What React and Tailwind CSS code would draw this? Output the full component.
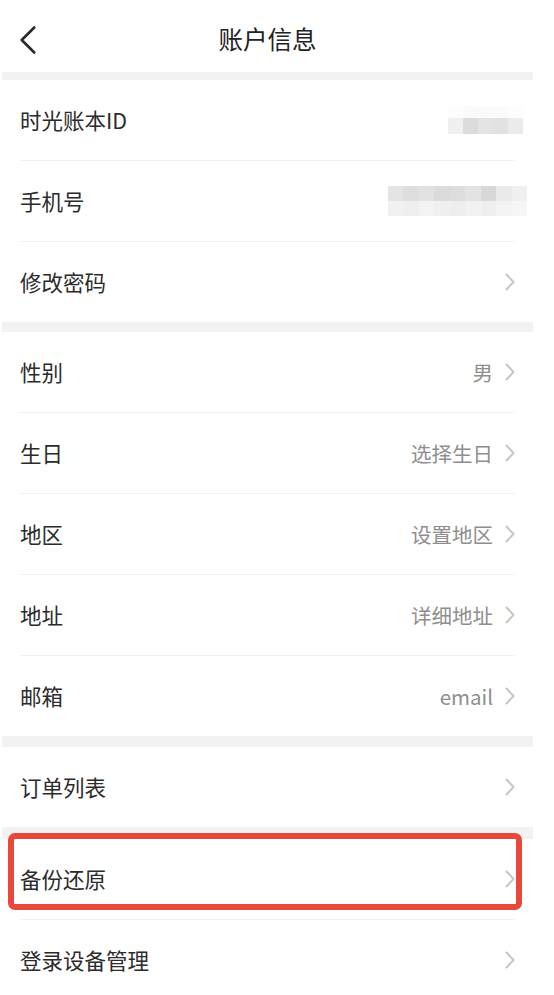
import { ChevronLeft } from "lucide-react";

const font = { fontFamily: '"Noto Sans CJK SC", "Noto Sans", sans-serif' };

const Arrow = () => (
  <svg width="10" height="18" viewBox="0 0 10 18" fill="none" className="shrink-0">
    <path d="M1.5 1.5 L8.5 9 L1.5 16.5" stroke="#c6c6c6" strokeWidth="2" strokeLinecap="round" strokeLinejoin="round" />
  </svg>
);

// pixelated blur placeholders
const IdBlur = () => (
  <div className="flex flex-col mr-[-8px]">
    <div className="flex h-[12px]">
      <div className="w-[15px] bg-[#fdfdfd]" />
      <div className="w-[15px] bg-[#fafafa]" />
      <div className="w-[30px] bg-[#fbfbfb]" />
      <div className="w-[15px] bg-[#fdfdfd]" />
    </div>
    <div className="flex h-[16px]">
      <div className="w-[15px] bg-[#f0f0f0]" />
      <div className="w-[15px] bg-[#dcdcdc]" />
      <div className="w-[15px] bg-[#e4e4e4]" />
      <div className="w-[15px] bg-[#e2e2e2]" />
      <div className="w-[15px] bg-[#ececec]" />
    </div>
  </div>
);

const PhoneBlur = () => (
  <div className="flex flex-col mr-[-12px]">
    <div className="flex h-[15px]">
      {["#e4e4e4", "#dedede", "#e2e2e2", "#dbdbdb", "#dddddd", "#e3e3e3", "#d8d8d8", "#eaeaea", "#f0f0f0"].map((c, i) => (
        <div key={i} className="w-[15.5px]" style={{ backgroundColor: c }} />
      ))}
    </div>
    <div className="flex h-[15px]">
      {["#f1f1f1", "#efefef", "#f3f3f3", "#f0f0f0", "#eeeeee", "#f2f2f2", "#efefef", "#f3f3f3", "#f6f6f6"].map((c, i) => (
        <div key={i} className="w-[15.5px]" style={{ backgroundColor: c }} />
      ))}
    </div>
  </div>
);

const Row = ({ label, value, arrow = true, right, divider = true, children }) => (
  <div className="relative">
    <div
      className={
        "ml-[18px] w-[495px] h-[80px] flex items-center justify-between " +
        (divider ? "border-b border-[#f0f0f0] h-[81px]" : "")
      }
    >
      <span className="text-[21.5px] text-[#2b2b2b]">{label}</span>
      <div className="flex items-center gap-[12px]">
        {right}
        {value && <span className="text-[20.5px] text-[#8e8e8e]">{value}</span>}
        {arrow && <Arrow />}
      </div>
    </div>
    {children}
  </div>
);

const Band = ({ h }) => <div className={"bg-[#f2f2f2] " + h} />;

export default function App() {
  return (
    <div className="w-[554px] h-[995px] bg-white overflow-hidden" style={font}>
      <div className="w-[533px] pl-[2px]">
        {/* header */}
        <div className="h-[72px] flex items-center relative">
          <ChevronLeft className="absolute left-[1px] top-[15px]" size={50} strokeWidth={1.3} color="#2b2b2b" />
          <div className="flex-1 text-center text-[24.5px] text-[#222] pt-[6px]">账户信息</div>
        </div>
        <Band h="h-[8px]" />
        <Row label="时光账本ID" arrow={false} right={<IdBlur />} />
        <Row label="手机号" arrow={false} right={<PhoneBlur />} />
        <Row label="修改密码" divider={false} />
        <Band h="h-[10px]" />
        <Row label="性别" value="男" />
        <Row label="生日" value="选择生日" />
        <Row label="地区" value="设置地区" />
        <Row label="地址" value="详细地址" />
        <Row label="邮箱" value="email" divider={false} />
        <Band h="h-[11px]" />
        <Row label="订单列表" divider={false} />
        <Band h="h-[12px]" />
        <Row label="备份还原">
          <div className="absolute left-[6px] top-[-6px] w-[514px] h-[77px] border-[6px] border-[#e8483b] rounded-[7px] pointer-events-none" />
        </Row>
        <Row label="登录设备管理" divider={false} />
      </div>
    </div>
  );
}
